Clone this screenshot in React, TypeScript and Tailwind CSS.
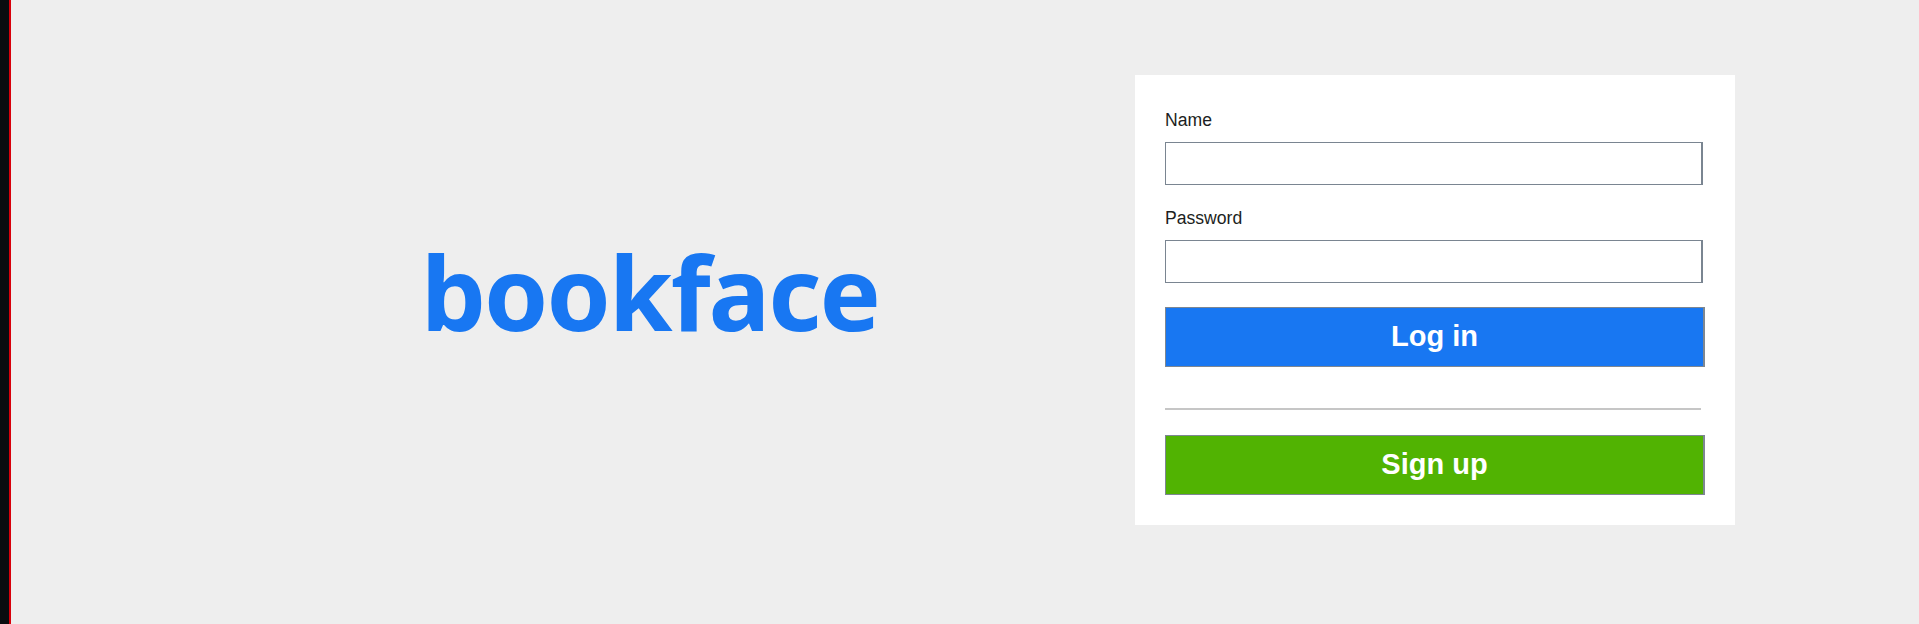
import React from 'react'

const labelCls = 'block text-[17.6px] leading-[20px] text-[#1c1e21]'
const inputCls =
  'block w-[538px] h-[43px] bg-white border border-[#7a8591] border-r-2 outline-none px-2 text-[17px]'
const btnCls =
  'block w-[540px] h-[60px] border border-[#7d8792] border-r-2 text-white font-bold text-[29px]'

const App = () => {
  return (
    <div className="flex h-[624px] w-full bg-[#eeeeee]" style={{ fontFamily: '"Liberation Sans", Arial, sans-serif' }}>
      <div className="w-[9px] shrink-0 bg-[#090c0f]" />
      <div className="w-[2px] shrink-0 bg-[#d8000b]" />

      <div className="flex items-start">
        {/* logo */}
        <div className="ml-[410px] mt-[221px] w-[467px] shrink-0">
          <h1
            className="text-[103px] font-bold leading-[140px] tracking-[-2px] text-[#1877f2]"
            style={{ fontFamily: '"Noto Sans", "Open Sans", sans-serif' }}
          >
            bookface
          </h1>
        </div>

        {/* login form */}
        <div className="ml-[247px] mt-[75px] flex h-[450px] w-[600px] shrink-0 flex-col bg-white px-[30px] pt-[35px]">
          <label className={labelCls}>Name</label>
          <input type="text" className={inputCls + ' mt-[12px]'} />

          <label className={labelCls + ' mt-[23px]'}>Password</label>
          <input type="password" className={inputCls + ' mt-[12px]'} />

          <button type="button" className={btnCls + ' mt-[24px] bg-[#1877f2]'}>
            Log in
          </button>

          <div className="mt-[41px] h-[2px] w-[536px] bg-[#c6c6c6]" />

          <button type="button" className={btnCls + ' mt-[25px] bg-[#51b302]'}>
            Sign up
          </button>
        </div>
      </div>
    </div>
  )
}

export default App
